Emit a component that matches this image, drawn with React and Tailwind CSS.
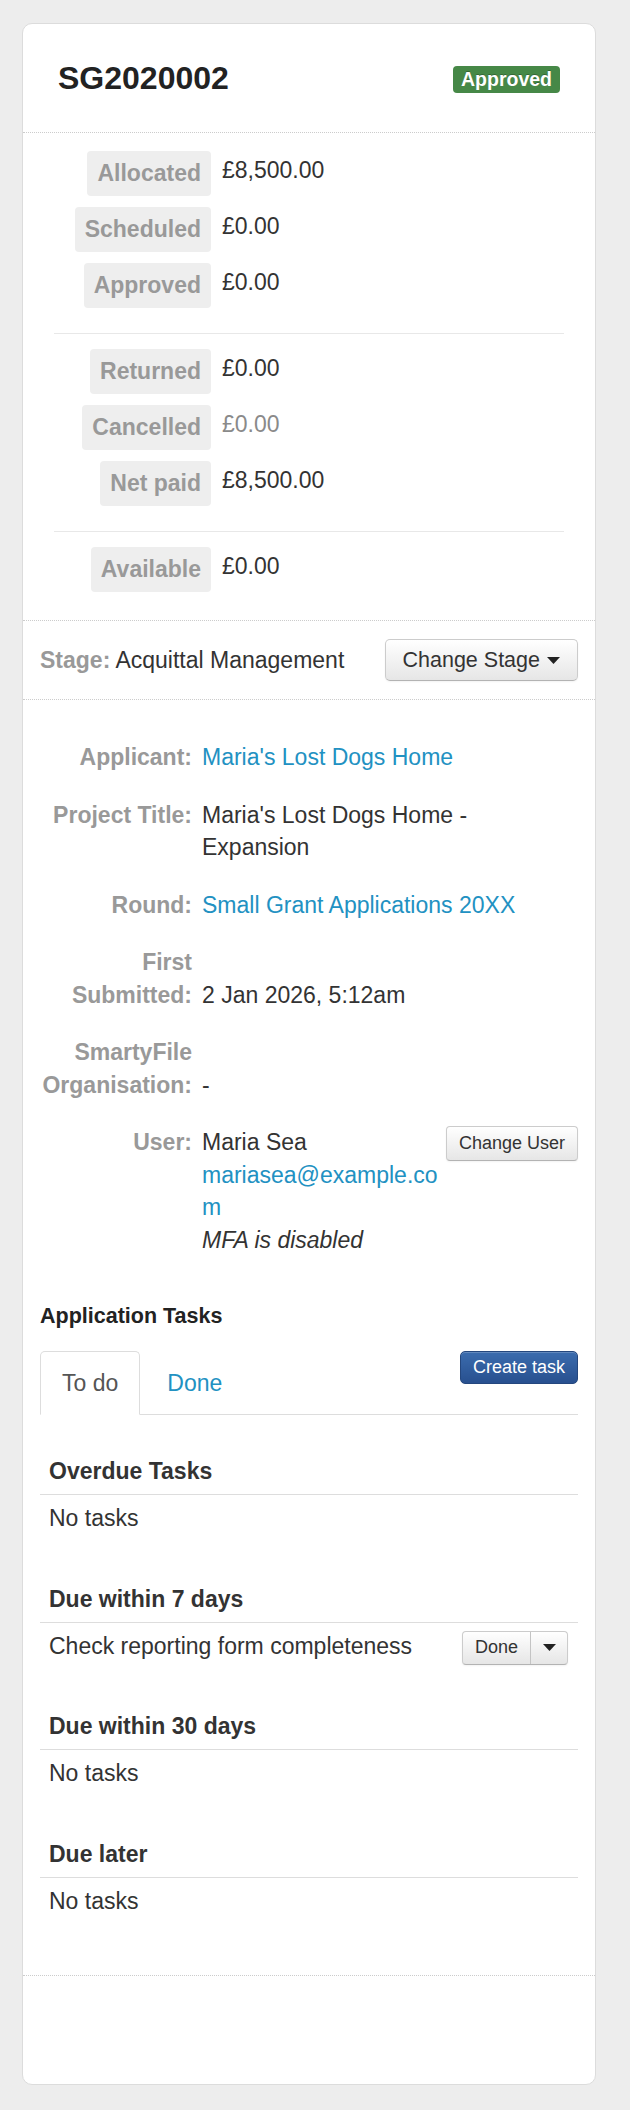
const MONEY = [
  [
    { label: 'Allocated', value: '£8,500.00' },
    { label: 'Scheduled', value: '£0.00' },
    { label: 'Approved', value: '£0.00' },
  ],
  [
    { label: 'Returned', value: '£0.00' },
    { label: 'Cancelled', value: '£0.00', muted: true },
    { label: 'Net paid', value: '£8,500.00' },
  ],
  [{ label: 'Available', value: '£0.00' }],
];

const TASK_GROUPS = [
  { title: 'Overdue Tasks', tasks: [] },
  { title: 'Due within 7 days', tasks: ['Check reporting form completeness'] },
  { title: 'Due within 30 days', tasks: [] },
  { title: 'Due later', tasks: [] },
];

function Caret() {
  return (
    <svg width="13" height="7" viewBox="0 0 13 7" className="shrink-0">
      <path d="M0 0h13L6.5 7z" fill="#222" />
    </svg>
  );
}

// bootstrap-ish default button
const btn =
  'border border-[#ccc] border-b-[#b3b3b3] bg-linear-to-b from-white to-[#e6e6e6] text-[#333] shadow-[inset_0_1px_0_rgba(255,255,255,0.2),0_1px_2px_rgba(0,0,0,0.05)]';

function DetailRow({ label, align = 'items-start', children }) {
  return (
    <div className={`grid grid-cols-[152px_1fr] gap-x-[10px] mb-[25px] last:mb-0 ${align}`}>
      <div className="text-right font-bold text-[#999]">{label}</div>
      <div className="min-w-0">{children}</div>
    </div>
  );
}

function TaskGroup({ title, tasks, last }) {
  return (
    <div className={last ? '' : 'mb-[48.5px]'}>
      <div className="border-b border-[#ddd] px-[9px] pb-[7px] font-bold text-[#333] leading-[32px]">
        {title}
      </div>
      {tasks.length === 0 && <div className="px-[9px] pt-[7px] leading-[32px]">No tasks</div>}
      {tasks.map((t) => (
        <div key={t} className="flex h-[39px] items-start justify-between pl-[9px] pr-[10px] pt-[7px]">
          <span className="leading-[32px]">{t}</span>
          <div className={`mt-px flex h-[34px] rounded-[4px] text-[18px] ${btn}`}>
            <span className="flex items-center px-[12px]">Done</span>
            <span className="flex w-[37px] items-center justify-center border-l border-[#c4c4c4]">
              <Caret />
            </span>
          </div>
        </div>
      ))}
    </div>
  );
}

export default function App() {
  return (
    <div className="min-h-[2110px] bg-[#ededed] pt-[23px] pb-[34px] font-['Liberation_Sans',Arial,sans-serif] text-[23px] text-[#333]">
      <div className="ml-[22px] w-[574px] rounded-[10px] border border-[#dcdcdc] bg-white">
        {/* header */}
        <div className="flex h-[109px] items-center justify-between border-b border-dotted border-[#ccc] px-[35px]">
          <h3 className="text-[32px] font-bold text-[#222]">SG2020002</h3>
          <span className="mt-[3px] rounded-[4px] bg-[#468847] px-[8px] text-[19.5px] font-bold leading-[27px] text-white text-shadow-[0_-1px_0_rgba(0,0,0,0.25)]">
            Approved
          </span>
        </div>

        {/* money */}
        <div className="flex flex-col border-b border-dotted border-[#ccc] px-[31px] pt-[18px] pb-[17px]">
          {MONEY.map((group, gi) => (
            <div key={gi} className={`flex flex-col ${gi > 0 ? 'mt-[14px] border-t border-[#e8e8e8] pt-[15px]' : ''}`}>
              {group.map((row) => (
                <div key={row.label} className="mb-[11px] flex items-start">
                  <div className="flex w-[157px] justify-end">
                    <span className="rounded-[4px] bg-[#eee] px-[10px] py-[9px] font-bold leading-[27px] text-[#999]">
                      {row.label}
                    </span>
                  </div>
                  <span className={`ml-[11px] mt-[3px] leading-[32px] ${row.muted ? 'text-[#8a8a8a]' : ''}`}>
                    {row.value}
                  </span>
                </div>
              ))}
            </div>
          ))}
        </div>

        {/* stage */}
        <div className="flex items-center justify-between border-b border-dotted border-[#ccc] px-[17px] py-[18px]">
          <div className="leading-[32px]">
            <span className="font-bold text-[#999]">Stage:</span> Acquittal Management
          </div>
          <button className={`flex h-[42px] items-center gap-[7px] rounded-[5px] pl-[17px] pr-[17px] text-[21.5px] ${btn}`}>
            Change Stage
            <Caret />
          </button>
        </div>

        {/* details */}
        <div className="px-[17px] pt-[41px] leading-[32.5px]">
          <DetailRow label="Applicant:">
            <a className="text-[#2291c2]">Maria's Lost Dogs Home</a>
          </DetailRow>
          <DetailRow label="Project Title:">Maria's Lost Dogs Home - Expansion</DetailRow>
          <DetailRow label="Round:">
            <a className="text-[#2291c2]">Small Grant Applications 20XX</a>
          </DetailRow>
          <DetailRow label="First Submitted:" align="items-end">
            2 Jan 2026, 5:12am
          </DetailRow>
          <DetailRow label="SmartyFile Organisation:" align="items-end">
            -
          </DetailRow>
          <DetailRow label="User:">
            <div className="flex items-start">
              <div className="min-w-0 flex-1">
                <div>Maria Sea</div>
                <a className="block break-all text-[#2291c2]">mariasea@example.com</a>
                <div className="italic">MFA is disabled</div>
              </div>
              <button className={`h-[35px] shrink-0 rounded-[4px] px-[12px] text-[18px] leading-[33px] ${btn}`}>
                Change User
              </button>
            </div>
          </DetailRow>
        </div>

        {/* tasks */}
        <div className="border-b border-dotted border-[#ccc] px-[17px] pt-[44px] pb-[58px]">
          <h4 className="text-[21.5px] font-bold leading-[32px] text-[#222]">Application Tasks</h4>
          <div className="mt-[19px] flex items-start justify-between border-b border-[#ddd]">
            <div className="flex">
              <span className="-mb-px rounded-t-[5px] border border-[#ddd] border-b-white bg-white px-[21px] py-[14.5px] leading-[32px] text-[#555]">
                To do
              </span>
              <span className="ml-[5px] border border-transparent px-[21px] py-[14.5px] leading-[32px] text-[#2291c2]">
                Done
              </span>
            </div>
            <button className="h-[33px] rounded-[5px] border border-[#24477e] bg-linear-to-b from-[#3b6cae] to-[#28508f] px-[12px] text-[18px] leading-[31px] text-white shadow-[inset_0_1px_0_rgba(255,255,255,0.2)]">
              Create task
            </button>
          </div>
          <div className="pt-[40px]">
            {TASK_GROUPS.map((g, i) => (
              <TaskGroup key={g.title} {...g} last={i === TASK_GROUPS.length - 1} />
            ))}
          </div>
        </div>

        <div className="h-[108px]" />
      </div>
    </div>
  );
}
